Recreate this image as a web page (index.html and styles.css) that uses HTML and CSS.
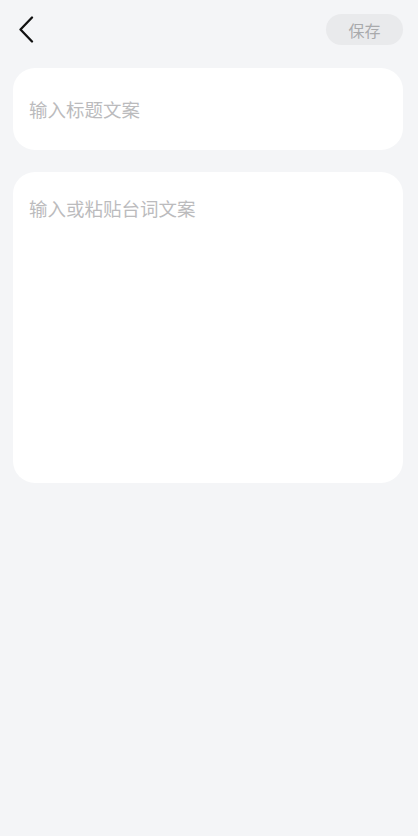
FILE: index.html
```html
<!DOCTYPE html>
<html lang="zh-CN">
<head>
    <meta charset="UTF-8">
    <meta name="viewport" content="width=device-width, initial-scale=1.0">
    <title>编辑文案</title>
    <link rel="stylesheet" href="styles.css">
</head>
<body>
    <div class="page">
        <div class="header">
            <button class="back" type="button" aria-label="返回">
                <svg width="16" height="27" viewBox="0 0 16 27">
                    <path d="M14 1.5 L2.5 13.5 L14 25.5" fill="none" stroke="#111" stroke-width="2.3" stroke-linecap="round" stroke-linejoin="round"/>
                </svg>
            </button>
            <button class="save" type="button" disabled>保存</button>
        </div>
        <div class="card title-card">
            <input class="title-input" type="text" placeholder="输入标题文案">
        </div>
        <div class="card script-card">
            <textarea class="script-input" placeholder="输入或粘贴台词文案"></textarea>
        </div>
    </div>
</body>
</html>
```

FILE: styles.css
```css
body {
    margin: 0;
    background-color: #f4f5f7;
    font-family: "Noto Sans CJK SC", "Noto Sans", sans-serif;
}
.page {
    padding: 14px 15px 0 13px;
}
.header {
    display: flex;
    justify-content: space-between;
    align-items: center;
    height: 31px;
}
.back {
    display: flex;
    align-items: center;
    padding: 0;
    margin-left: 5px;
    border: none;
    background: none;
}
.save {
    width: 77px;
    height: 31px;
    border: none;
    border-radius: 16px;
    background-color: #e9eaec;
    color: #a9aaac;
    font-family: inherit;
    font-size: 16px;
    padding: 0;
}
.card {
    background-color: #fff;
    border-radius: 22px;
}
.title-card {
    margin-top: 23px;
    height: 82px;
    display: flex;
    align-items: center;
    padding: 0 16px;
}
.script-card {
    margin-top: 22px;
    height: 311px;
    padding: 24px 16px 0;
    box-sizing: border-box;
}
.title-input, .script-input {
    width: 100%;
    border: none;
    outline: none;
    padding: 0;
    background: none;
    font-family: inherit;
    font-size: 18.5px;
    line-height: 24px;
    color: #333;
}
.script-input {
    height: 260px;
    resize: none;
}
.title-input::placeholder, .script-input::placeholder {
    color: #bbbbbd;
}
```
